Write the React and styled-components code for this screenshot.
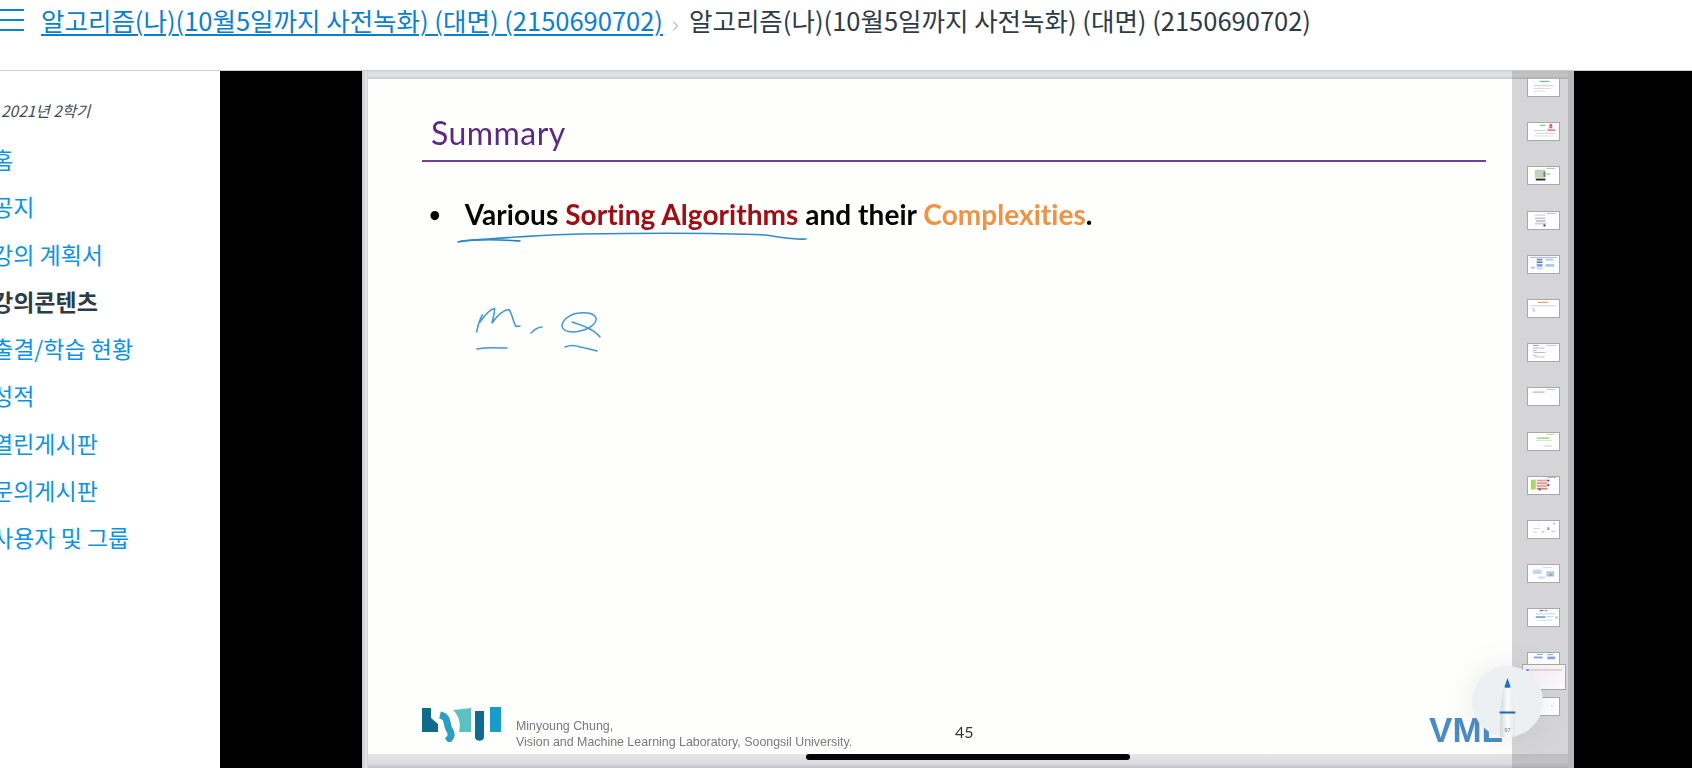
import React from "react";
import styled, { createGlobalStyle } from "styled-components";

const Global = createGlobalStyle`
  html, body { margin: 0; padding: 0; background: #fff; overflow: hidden; }
  body { width: 1692px; height: 782px; font-family: "Noto Sans CJK KR", "Noto Sans", sans-serif; }
  * { box-sizing: border-box; }
`;

const Page = styled.div`
  width: 1692px;
  height: 782px;
  display: flex;
  flex-direction: column;
  overflow: hidden;
`;

const Header = styled.header`
  height: 71px;
  flex: none;
  display: flex;
  align-items: flex-start;
  border-bottom: 1px solid #c7cdd1;
  padding-top: 1px;
`;

const Burger = styled.div`
  width: 24px;
  height: 22px;
  margin-top: 8px;
  flex: none;
  display: flex;
  flex-direction: column;
  justify-content: space-between;
  span { display: block; height: 2px; background: #0a84d8; }
`;

const Crumbs = styled.nav`
  display: flex;
  align-items: baseline;
  margin-left: 17px;
  font-size: 25.5px;
  line-height: 38px;
  white-space: nowrap;
`;

const CrumbLink = styled.a`
  color: #0a7fd0;
  text-decoration: underline;
  text-decoration-thickness: 2px;
  text-underline-offset: 3px;
`;

const Chevron = styled.svg`
  width: 7px;
  height: 10px;
  margin: 0 10px 0 9px;
`;

const CrumbCurrent = styled.span`
  color: #2d3b45;
`;

const Main = styled.div`
  flex: 1;
  display: flex;
  min-height: 0;
  align-items: flex-start;
`;

const Sidebar = styled.aside`
  width: 220px;
  flex: none;
  overflow: hidden;
  padding-top: 27px;
`;

const Term = styled.div`
  margin-left: 1px;
  font-size: 15.5px;
  line-height: 24px;
  font-style: italic;
  color: #3e4a53;
`;

const NavList = styled.ul`
  list-style: none;
  margin: 22px 0 0 -8px;
  padding: 0;
  display: flex;
  flex-direction: column;
  gap: 17.3px;
`;

const NavItem = styled.li`
  font-size: 23px;
  line-height: 30px;
  white-space: nowrap;
  color: ${p => (p.$active ? "#2d3b45" : "#0a93e6")};
  font-weight: ${p => (p.$active ? 700 : 400)};
`;

const Video = styled.section`
  flex: 1;
  height: 697px;
  background: #000;
  padding: 0 118px 0 142px;
`;

const Stage = styled.div`
  position: relative;
  height: 100%;
  display: grid;
  grid-template-columns: 6px 1144px 56px 6px;
  grid-template-rows: 8px 1fr 14px;
  background: #dedee3;
  overflow: hidden;
  filter: blur(0.35px);
`;

const EdgeLeft = styled.div`
  grid-column: 1;
  grid-row: 1 / 4;
  background: linear-gradient(90deg, #c9c9ce 0, #e2e2e8 60%, #d3d3d8 100%);
`;

const EdgeTop = styled.div`
  grid-column: 2;
  grid-row: 1;
  background: linear-gradient(180deg, #dadae2 0, #e4e4ea 55%, #c9c9cf 100%);
`;

const EdgeBottom = styled.div`
  grid-column: 2;
  grid-row: 3;
  background: linear-gradient(180deg, #e6e6ea 0, #dcdce0 70%, #bfc0c4 100%);
`;

const RailCap = styled.div`
  grid-column: 3;
  background: linear-gradient(180deg, #bdbdc0 0, #c3c3c6 60%, #aeaeb1 100%);
  grid-row: ${p => p.$row};
`;

const EdgeRight = styled.div`
  grid-column: 4;
  grid-row: 1 / 4;
  background: #b7b8bb;
`;

const Slide = styled.article`
  grid-column: 2;
  grid-row: 2;
  position: relative;
  background: #fefefd;
  display: flex;
  flex-direction: column;
  padding: 0 26px 0 54px;
  font-family: Lato, "Open Sans", sans-serif;
`;

const SlideTitle = styled.h1`
  margin: 30px 0 0 9px;
  font-size: 32px;
  line-height: 48px;
  font-weight: 400;
  letter-spacing: 0.45px;
  color: #5b2a86;
`;

const TitleRule = styled.div`
  height: 2px;
  margin-top: 3px;
  background: #70409c;
`;

const Bullet = styled.p`
  margin: 30px 0 0 7px;
  font-size: 28px;
  line-height: 44px;
  font-weight: 700;
  letter-spacing: 0.05px;
  color: #050505;
  display: flex;
  gap: 24px;
`;

const BulletDot = styled.span`
  font-size: 20px;
`;

const Accent = styled.span`
  color: ${p => p.$color};
`;

const SlideFooter = styled.footer`
  margin-top: auto;
  margin-bottom: 4px;
  display: flex;
  align-items: flex-end;
  position: relative;
`;

const Logo = styled.svg`
  width: 80px;
  height: 35px;
  flex: none;
  margin-bottom: 8px;
`;

const Credit = styled.div`
  margin-left: 14px;
  font-family: "Liberation Sans", Arial, sans-serif;
  font-size: 12.4px;
  line-height: 15.5px;
  color: #77797c;
  width: 400px;
`;

const PageNumber = styled.div`
  margin-left: 39px;
  margin-bottom: 6px;
  font-family: Lato, sans-serif;
  font-size: 16px;
  line-height: 24px;
  color: #333;
`;

const Brand = styled.div`
  margin-left: auto;
  margin-right: -17px;
  margin-bottom: 3px;
  font-family: "Liberation Sans", Arial, sans-serif;
  font-weight: 700;
  font-size: 35px;
  line-height: 34px;
  color: #4a8ac8;
`;

const Ink = styled.svg`
  position: absolute;
  left: 0;
  top: 0;
  width: 1144px;
  height: 675px;
  pointer-events: none;
`;

const Rail = styled.div`
  grid-column: 3;
  grid-row: 2;
  background: #d5d5d7;
  overflow: hidden;
  display: flex;
  flex-direction: column;
  gap: 25.2px;
  padding: 0 0 0 15px;
`;

const Thumb = styled.svg`
  width: 33px;
  height: 19px;
  flex: none;
  background: #fff;
  border: 1.5px solid #a8a8ab;
  filter: blur(0.5px);
  margin-top: ${p => (p.$first ? "-1px" : "0")};
`;

const HomeBar = styled.div`
  position: absolute;
  left: 444px;
  bottom: 8px;
  width: 324px;
  height: 6px;
  border-radius: 3px;
  background: #050505;
`;

const FloatThumb = styled.div`
  position: absolute;
  left: 1160px;
  top: 593px;
  width: 44px;
  height: 26px;
  background: linear-gradient(180deg, #f6f3f6, #fbfbfb);
  border: 1px solid #a7a7aa;
  display: flex;
  padding: 4px 3px;
  gap: 1px;
  span { height: 2px; flex: 1; background: #e6d2da; }
  span:first-child { background: #7b9fd8; flex: 0 0 3px; }
`;

const PenBubble = styled.div`
  position: absolute;
  left: 1110px;
  top: 595px;
  width: 71px;
  height: 71px;
  border-radius: 50%;
  background: #edf0f3;
  box-shadow: 0 0 30px rgba(120, 120, 130, 0.14);
  display: flex;
  align-items: flex-start;
  justify-content: center;
`;

const PenIcon = styled.svg`
  width: 71px;
  height: 71px;
`;

const thumbs = [
  [["#6fc27a", 12, 2, 10, 1.4], ["#c5c5c5", 6, 7, 20, 1], ["#d2d2d2", 6, 10, 18, 1], ["#dadada", 6, 13, 12, 1]],
  [["#74c47c", 12, 2, 6, 1.2], ["#e06a6a", 22, 1, 3, 5], ["#e58585", 20, 7, 8, 2], ["#c7c7c7", 6, 8, 12, 1], ["#cfcfcf", 8, 11, 20, 1], ["#dadada", 6, 14, 20, 1]],
  [["#86cc8a", 19, 1, 9, 1], ["#c3d0bd", 7, 3, 11, 9], ["#4f9a58", 16, 5, 2, 6], ["#c6c6c6", 19, 7, 4, 2], ["#222222", 8, 13, 10, 2]],
  [["#8ccf90", 19, 1, 10, 1], ["#c7c7cc", 7, 3, 11, 1], ["#c9cdd6", 7, 6, 11, 2], ["#b9c4d4", 8, 9, 10, 2], ["#d0d0d0", 7, 12, 12, 2], ["#333333", 16, 14, 2, 2]],
  [["#8db7e6", 2, 1, 28, 1], ["#7a8fb0", 9, 3, 6, 2], ["#5a7fc8", 9, 6, 6, 2], ["#7da4e0", 9, 9, 6, 3], ["#a9c8ef", 18, 3, 8, 2], ["#a9c8ef", 18, 9, 9, 3], ["#9fc1ec", 3, 12, 4, 2], ["#bcd3f0", 9, 13, 6, 2]],
  [["#ee9b5e", 10, 2, 11, 1.3], ["#c9c9c9", 3, 6, 26, 1], ["#d8d8d8", 4, 9, 3, 2], ["#c5c5c5", 5, 11, 2, 2]],
  [["#9ad49d", 19, 1, 10, 1], ["#e08b8b", 5, 1, 6, 1.2], ["#a4b7d8", 5, 4, 12, 1], ["#e0a0a0", 5, 7, 4, 1], ["#a4b7d8", 6, 9, 12, 1], ["#e0a0a0", 5, 12, 4, 1], ["#bdbdbd", 7, 14, 10, 1]],
  [["#9ad49d", 19, 1, 9, 1], ["#e09a9a", 5, 4, 12, 1.2]],
  [["#8ccf6f", 9, 5, 13, 1.4], ["#a5dd8a", 19, 1, 8, 1], ["#d8d8d8", 8, 8, 16, 1], ["#c6c6c6", 16, 14, 9, 1]],
  [["#8ccf90", 20, 0, 9, 1], ["#a5d95c", 3, 3, 5, 11], ["#e6a0a0", 9, 3, 11, 2], ["#e69090", 9, 6, 11, 2], ["#e6a0a0", 9, 9, 11, 2], ["#dd7d7d", 9, 12, 11, 2], ["#a52b2b", 20, 3, 2, 2], ["#a52b2b", 20, 8, 2, 2], ["#a52b2b", 11, 13, 2, 2]],
  [["#b9c4d9", 10, 4, 2, 1], ["#7f91c7", 20, 7, 2, 3], ["#c5cad8", 6, 8, 6, 1], ["#c9cfdc", 14, 11, 3, 2], ["#c9cfdc", 5, 12, 4, 1], ["#b4bed4", 24, 11, 4, 1], ["#aac0da", 26, 2, 2, 2]],
  [["#c7d6ea", 5, 5, 9, 5], ["#b3c8e4", 19, 7, 8, 6], ["#7fa3d4", 22, 10, 3, 2], ["#c9d8ea", 10, 13, 8, 2], ["#cfd8e6", 15, 2, 10, 1]],
  [["#5a7fc8", 12, 1, 4, 1.5], ["#e08080", 17, 1, 3, 1.5], ["#b8cdea", 8, 5, 20, 1], ["#7da4e0", 8, 8, 10, 2], ["#bcd3f0", 19, 8, 7, 1], ["#c5d7ee", 28, 8, 3, 3], ["#cbd5e2", 9, 12, 16, 1]],
  [["#6fbf8a", 9, 1, 6, 1.2], ["#8db7e6", 20, 1, 6, 1.5], ["#7da4e0", 6, 4, 9, 2], ["#7da4e0", 20, 4, 8, 3]],
  [["#e4e4e4", 24, 8, 2, 2]]
];

const navItems = ["홈", "공지", "강의 계획서", "강의콘텐츠", "출결/학습 현황", "성적", "열린게시판", "문의게시판", "사용자 및 그룹"];

const crumb = "알고리즘(나)(10월5일까지 사전녹화) (대면) (2150690702)";

export default function App() {
  return (
    <Page>
      <Global />
      <Header>
        <Burger><span /><span /><span /></Burger>
        <Crumbs>
          <CrumbLink>{crumb}</CrumbLink>
          <Chevron viewBox="0 0 7 10"><path d="M1.5 1 L5.5 5 L1.5 9" fill="none" stroke="#8a949b" strokeWidth="1" /></Chevron>
          <CrumbCurrent>{crumb}</CrumbCurrent>
        </Crumbs>
      </Header>
      <Main>
        <Sidebar>
          <Term>2021년 2학기</Term>
          <NavList>
            {navItems.map(n => <NavItem key={n} $active={n === "강의콘텐츠"}>{n}</NavItem>)}
          </NavList>
        </Sidebar>
        <Video>
          <Stage>
            <EdgeLeft />
            <EdgeTop />
            <RailCap $row={1} />
            <EdgeRight />
            <Slide>
              <SlideTitle>Summary</SlideTitle>
              <TitleRule />
              <Bullet>
                <BulletDot>•</BulletDot>
                <span>
                  Various <Accent $color="#a00d12">Sorting Algorithms</Accent> and their <Accent $color="#ee9344">Complexities</Accent>.
                </span>
              </Bullet>
              <SlideFooter>
                <Logo viewBox="0 0 80 35">
                  <path d="M0 1 H9 V11 L16 17 V25 H0 Z" fill="#0f6b8e" />
                  <path d="M18 8 C27 10 24 17 27 22 C31 27 29 31 25 34" fill="none" stroke="#2b9fc2" strokeWidth="7" />
                  <path d="M31 3 L49 1 V25 H37 C39 16 37 9 31 3 Z" fill="#5dc1bf" />
                  <path d="M53 4 H62 V30 C62 35 53 35 53 30 Z" fill="#0e6b92" />
                  <rect x="68" y="0" width="11" height="25" fill="#189dc9" />
                </Logo>
                <Credit>
                  Minyoung Chung,<br />
                  Vision and Machine Learning Laboratory, Soongsil University.
                </Credit>
                <PageNumber>45</PageNumber>
                <Brand>VML</Brand>
              </SlideFooter>
              <Ink viewBox="0 0 1144 675">
                <g transform="translate(-368 -79)" fill="none" stroke="#3f97d6" strokeLinecap="round" strokeLinejoin="round" strokeWidth="1.5">
                  <path d="M458 242 C480 238 505 240 520 241" stroke="#1f7fc4" strokeWidth="1.6" />
                  <path d="M461 241 C500 238 540 235 580 234 C650 233 720 233 765 235 C780 237 795 240 806 239" stroke="#2e8ccd" strokeWidth="1.6" />
                  <path d="M476.6 332 C478 325 480 319 482.4 315" />
                  <path d="M480 322 C485 315 490 309 494.5 308.5 C495 313 493 318 492 323 C497 316 503 310 509 309.5 C512 313 513 322 516 326.5 L520 326" />
                  <path d="M531 333 C534 330 538 327 542 327" />
                  <path d="M579 313 C570 314 562 320 562 326 C563 332 572 333 580 331 C590 329 597 323 596 318 C594 313 586 312 579 313 Z" />
                  <path d="M572 322 C582 325 594 329 600 337" />
                  <path d="M477 349 C487 347 498 348 507 348" />
                  <path d="M565 347 C570 345 575 345 580 347 C586 348 592 350 597 351" />
                </g>
              </Ink>
            </Slide>
            <Rail>
              {thumbs.map((marks, i) => (
                <Thumb key={i} $first={i === 0} viewBox="0 0 32 19" preserveAspectRatio="none">
                  {marks.map(([fill, x, y, w, h], j) => <rect key={j} x={x} y={y} width={w} height={h} fill={fill} />)}
                </Thumb>
              ))}
            </Rail>
            <EdgeBottom />
            <RailCap $row={3} />
            <HomeBar />
            <FloatThumb><span /><span /></FloatThumb>
            <PenBubble>
              <PenIcon viewBox="0 0 71 71">
                <defs>
                  <linearGradient id="penBody" x1="0" x2="1" y1="0" y2="0">
                    <stop offset="0" stopColor="#d3d6da" />
                    <stop offset="0.5" stopColor="#fbfcfd" />
                    <stop offset="1" stopColor="#e4e6e9" />
                  </linearGradient>
                </defs>
                <path d="M32 21 L39 21 C42 32 43 45 43 71 L28 71 C28 45 29 32 32 21 Z" fill="url(#penBody)" />
                <path d="M35.5 12 L38.6 21 C39 22 32 22 32.4 21 Z" fill="#1f6fc4" />
                <rect x="27.6" y="45.5" width="15.8" height="2" fill="#1c69b8" />
                <text x="35.5" y="66" textAnchor="middle" fontFamily="Liberation Sans, sans-serif" fontSize="5.5" fill="#707478">97</text>
              </PenIcon>
            </PenBubble>
          </Stage>
        </Video>
      </Main>
    </Page>
  );
}
